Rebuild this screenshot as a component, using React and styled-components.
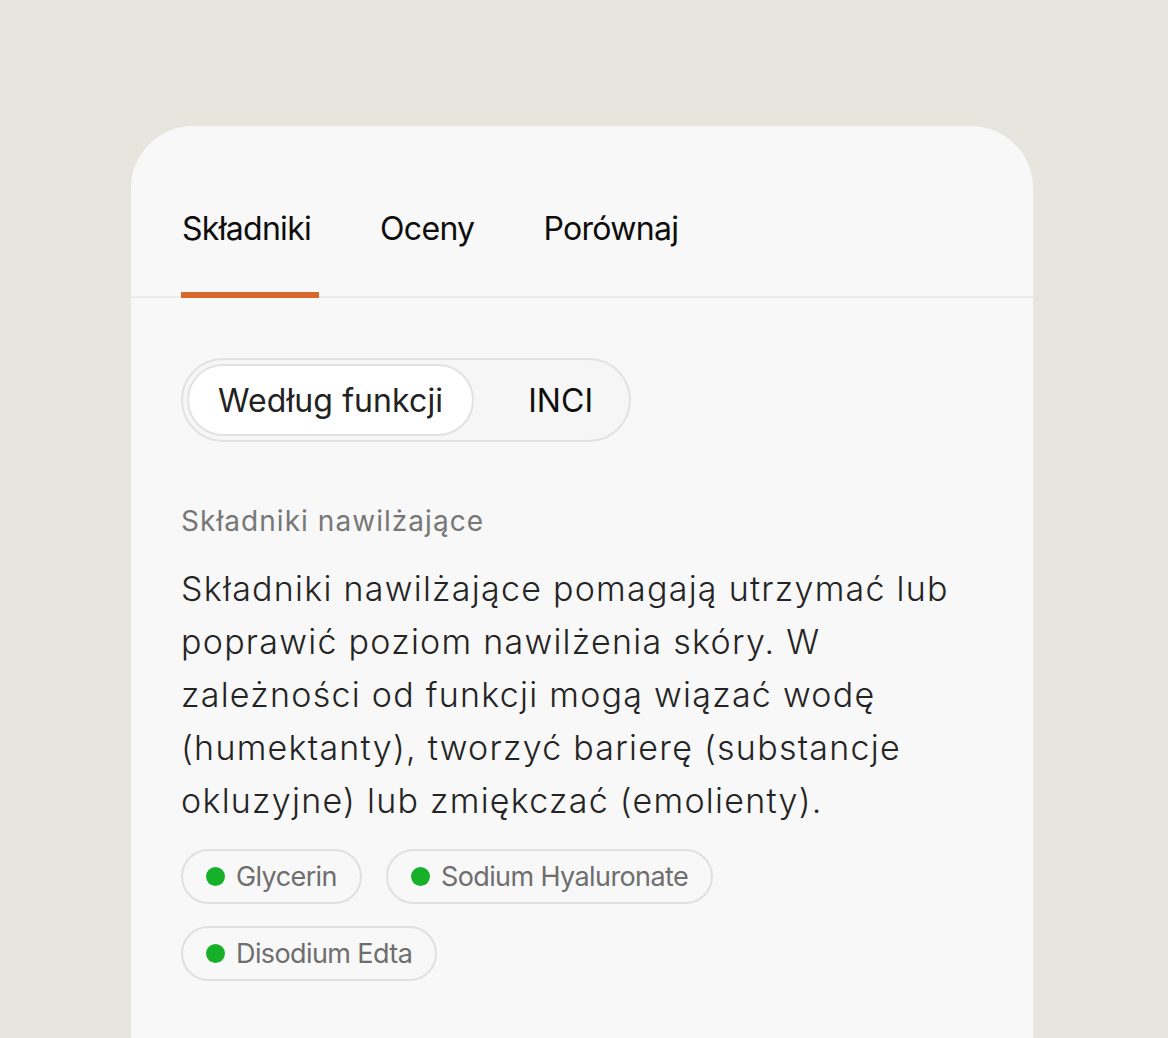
import React, { useState } from "react";
import styled, { createGlobalStyle } from "styled-components";

const Global = createGlobalStyle`
  html, body { margin: 0; padding: 0; background: #e6e6df; }
  body { font-family: Inter, "Noto Sans", sans-serif; -webkit-font-smoothing: antialiased; }
  * { box-sizing: border-box; }
`;

const Page = styled.div`
  height: 1038px;
  padding: 126px 0 0 131px;
  overflow: hidden;
`;

const Card = styled.div`
  width: 902px;
  min-height: 980px;
  background: #f8f8f8;
  border-radius: 62px 62px 0 0;
`;

const TabBar = styled.div`
  display: flex;
  gap: 60px;
  padding: 0 50px;
  border-bottom: 2px solid #ececec;
  height: 172px;
  align-items: stretch;
`;

const Tab = styled.button`
  position: relative;
  border: none;
  background: none;
  padding: 0 8px 48px 1px;
  font-family: Inter, sans-serif;
  font-size: 32px;
  letter-spacing: -0.7px;
  color: #0d0d0d;
  cursor: pointer;
  display: flex;
  align-items: flex-end;
  &::after {
    content: "";
    position: absolute;
    left: 0;
    right: 0;
    bottom: -2px;
    height: 6px;
    background: ${(p) => (p.$active ? "#d9672b" : "transparent")};
  }
`;

const Body = styled.div`
  padding: 60px 50px 0;
`;

const Segmented = styled.div`
  display: inline-flex;
  align-items: center;
  padding: 4px;
  border: 2px solid #e2e2e2;
  border-radius: 999px;
  background: #f6f6f6;
`;

const SegButton = styled.button`
  height: 72px;
  padding: ${(p) => (p.$active ? "0 29px" : "0 30px 0 52px")};
  border-radius: 999px;
  border: 2px solid ${(p) => (p.$active ? "#e2e2e2" : "transparent")};
  background: ${(p) => (p.$active ? "#ffffff" : "transparent")};
  font-family: Inter, sans-serif;
  font-size: 32px;
  letter-spacing: 0.1px;
  color: ${(p) => (p.$active ? "#222" : "#0d0d0d")};
  cursor: pointer;
`;

const Section = styled.section`
  margin-top: 62px;
`;

const Label = styled.div`
  font-size: 28px;
  color: #777777;
  letter-spacing: 1.05px;
  line-height: 34px;
`;

const Paragraph = styled.p`
  margin: 24px 0 0;
  font-size: 34px;
  font-weight: 300;
  line-height: 53px;
  color: #242424;
  letter-spacing: 1.26px;
  width: 802px;
`;

const Chips = styled.div`
  display: flex;
  flex-wrap: wrap;
  gap: 22px 24px;
  margin-top: 22px;
  width: 790px;
`;

const Chip = styled.div`
  display: inline-flex;
  align-items: center;
  gap: 11px;
  height: 55px;
  padding: 0 23px;
  border: 2px solid #e0e0e0;
  border-radius: 999px;
  font-size: 27px;
  color: #6e6e6e;
  letter-spacing: -0.6px;
`;

const Dot = styled.span`
  width: 19px;
  height: 19px;
  border-radius: 50%;
  background: #17b029;
  flex: none;
`;

export default function App() {
  const [tab, setTab] = useState(0);
  const [mode, setMode] = useState(0);
  const tabs = ["Składniki", "Oceny", "Porównaj"];
  const chips = ["Glycerin", "Sodium Hyaluronate", "Disodium Edta"];
  return (
    <>
      <Global />
      <Page>
        <Card>
          <TabBar>
            {tabs.map((t, i) => (
              <Tab key={t} $active={tab === i} onClick={() => setTab(i)}>
                {t}
              </Tab>
            ))}
          </TabBar>
          <Body>
            <Segmented>
              <SegButton $active={mode === 0} onClick={() => setMode(0)}>
                Według funkcji
              </SegButton>
              <SegButton $active={mode === 1} onClick={() => setMode(1)}>
                INCI
              </SegButton>
            </Segmented>
            <Section>
              <Label>Składniki nawilżające</Label>
              <Paragraph>
                Składniki nawilżające pomagają utrzymać lub poprawić poziom
                nawilżenia skóry. W zależności od funkcji mogą wiązać wodę
                (humektanty), tworzyć barierę (substancje okluzyjne) lub
                zmiękczać (emolienty).
              </Paragraph>
              <Chips>
                {chips.map((c) => (
                  <Chip key={c}>
                    <Dot />
                    {c}
                  </Chip>
                ))}
              </Chips>
            </Section>
          </Body>
        </Card>
      </Page>
    </>
  );
}
